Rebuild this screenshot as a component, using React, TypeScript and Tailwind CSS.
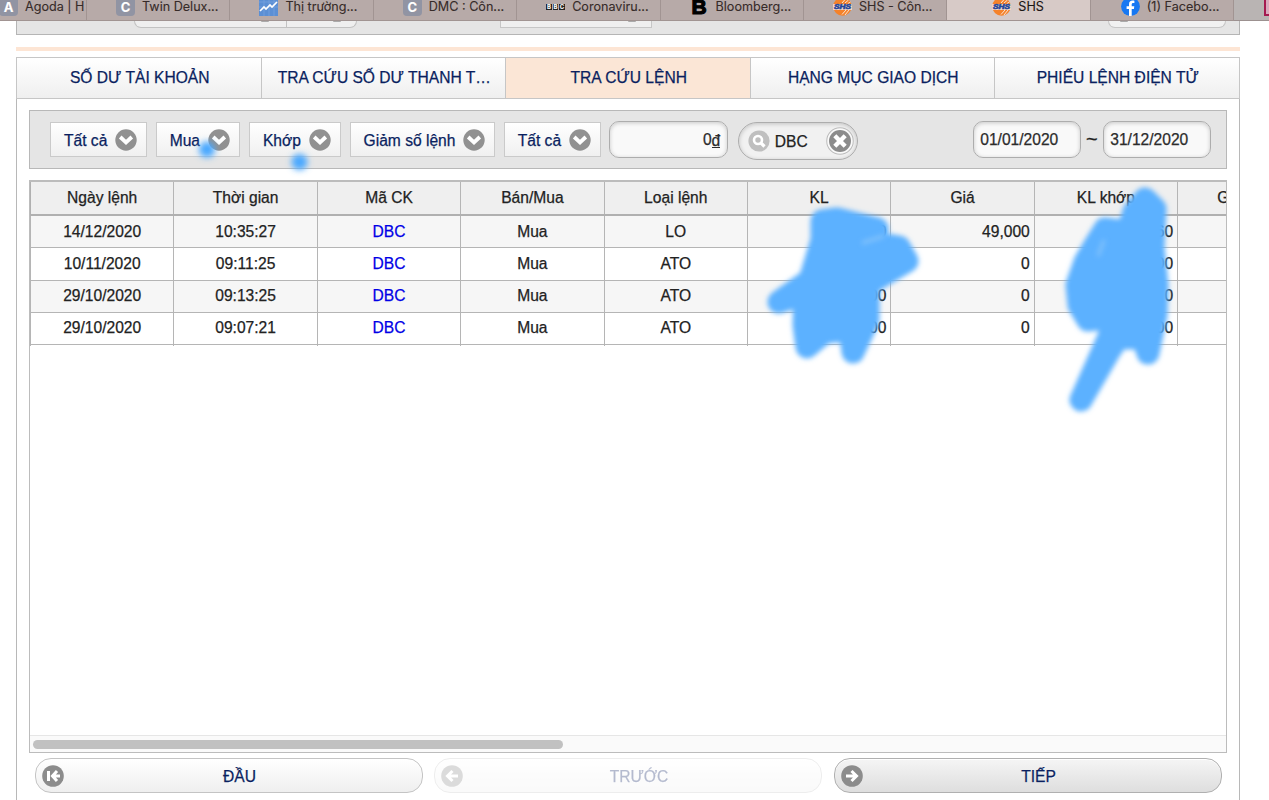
import React from "react";

const FONT = "font-['Liberation_Sans',Arial,sans-serif]";

function ChevronBadge() {
  return (
    <svg className="h-[22px] w-[22px] shrink-0" viewBox="0 0 22 22">
      <circle cx="11" cy="11" r="10.7" fill="#919191" />
      <path d="M5.2 8 L11 13.4 L16.8 8" fill="none" stroke="#fff" strokeWidth="3.8" />
    </svg>
  );
}

function ShsLogo() {
  return (
    <svg className="h-[19px] w-[19px]" viewBox="0 0 19 19">
      <circle cx="9.5" cy="9.5" r="9.3" fill="#f5822a" />
      <path d="M0 7 H19 V13 H0Z" fill="#f3d3c0" />
      <path d="M9 17.5 L13 13 M12 18 L16 13 M9 6 L13 1.5 M12 6 L15.5 3 M15 6.5 L17.5 5" stroke="#fbe3d2" strokeWidth="1" />
      <text x="9.5" y="12.4" textAnchor="middle" fontSize="6.6" fontWeight="bold" fontStyle="italic" fontFamily="Liberation Sans" fill="#24469b" stroke="#24469b" strokeWidth="0.6" textLength="17" lengthAdjust="spacingAndGlyphs">SHS</text>
    </svg>
  );
}

function Letter({ children }: { children: string }) {
  return (
    <span className="flex h-[19px] w-[19px] items-center justify-center rounded-[4px] bg-[#9194a3] text-[13px] font-bold text-white">{children}</span>
  );
}

const browserTabs: { icon: React.ReactNode; label: string; cls: string }[] = [
  { icon: <Letter>A</Letter>, label: "Agoda | H", cls: "w-[87px] pl-0" },
  { icon: <Letter>C</Letter>, label: "Twin Delux...", cls: "w-[143.4px] pl-[29px]" },
  {
    icon: (
      <svg className="h-[19px] w-[19px]" viewBox="0 0 19 19">
        <rect width="19" height="19" fill="#5b8fd4" />
        <path d="M0 5H19M0 10H19M5 0V19M10 0V19M15 0V19" stroke="#79a5df" strokeWidth=".7" />
        <path d="M1 14 L5 10 L7 12 L11 8 L13 10 L18 5" fill="none" stroke="#fff" strokeWidth="1.7" />
      </svg>
    ),
    label: "Thị trường...", cls: "w-[143.4px] pl-[29px]",
  },
  { icon: <Letter>C</Letter>, label: "DMC : Côn...", cls: "w-[143.4px] pl-[29px]" },
  {
    icon: (
      <span className="flex h-[19px] w-[19px] items-center gap-px">
        {["B", "B", "C"].map((c, i) => (
          <b key={i} className="flex h-[6px] w-[5.5px] items-center justify-center bg-[#222] text-[6px] leading-none text-white">{c}</b>
        ))}
      </span>
    ),
    label: "Coronaviru...", cls: "w-[143.4px] pl-[29px]",
  },
  { icon: <span className="flex h-[19px] w-[19px] items-center justify-center font-['Liberation_Sans'] text-[21px] font-black leading-none text-black [-webkit-text-stroke:1.2px_black]">B</span>, label: "Bloomberg...", cls: "w-[143.4px] pl-[29px]" },
  { icon: <ShsLogo />, label: "SHS - Côn...", cls: "w-[143.4px] pl-[29px]" },
  { icon: <ShsLogo />, label: "SHS", cls: "w-[143.4px] pl-[45px] bg-[#d7cac7] text-[#1b1614]" },
  {
    icon: (
      <svg className="h-[19px] w-[19px]" viewBox="0 0 19 19">
        <circle cx="9.5" cy="9.5" r="9.4" fill="#1778f2" />
        <path d="M8 19V12H5.6V9.3H8V7.2C8 4.8 9.4 3.5 11.5 3.5c1 0 1.9.2 1.9.2V6h-1.2c-1.1 0-1.5.7-1.5 1.4v1.9h2.6l-.4 2.7h-2.2v7z" fill="#fff" />
      </svg>
    ),
    label: "(1) Facebo...", cls: "w-[143.4px] pl-[30px]",
  },
];

const sections = ["SỐ DƯ TÀI KHOẢN", "TRA CỨU SỐ DƯ THANH T…", "TRA CỨU LỆNH", "HẠNG MỤC GIAO DỊCH", "PHIẾU LỆNH ĐIỆN TỬ"];

const filters = [
  { label: "Tất cả", w: "w-[97px]" },
  { label: "Mua", w: "w-[84.5px]" },
  { label: "Khớp", w: "w-[92px]" },
  { label: "Giảm số lệnh", w: "w-[145.5px]" },
  { label: "Tất cả", w: "w-[97px]" },
];

const headers = ["Ngày lệnh", "Thời gian", "Mã CK", "Bán/Mua", "Loại lệnh", "KL", "Giá", "KL khớp", "Giá khớp"];
const rows = [
  ["14/12/2020", "10:35:27", "DBC", "Mua", "LO", "00", "49,000", "60", ""],
  ["10/11/2020", "09:11:25", "DBC", "Mua", "ATO", "0", "0", "00", ""],
  ["29/10/2020", "09:13:25", "DBC", "Mua", "ATO", "00", "0", "0", ""],
  ["29/10/2020", "09:07:21", "DBC", "Mua", "ATO", "00", "0", "00", ""],
];

const field = "flex h-[37px] items-center rounded-[10px] border border-[#adadad] bg-[#f9f9f9] px-[6.5px] text-[#2c2c2c] shadow-[inset_0_1px_4px_rgba(0,0,0,0.2)]";
const GRID = "grid w-[1291px] grid-cols-[repeat(9,143.4px)]";

function Pager({ label, icon, tone }: { label: string; icon: string; tone: string }) {
  return (
    <div className={`flex h-[35px] w-[388px] items-center rounded-[16px] border pl-[6px] pr-[6px] shadow-[inset_0_1px_0_white] ${tone}`}>
      <svg className="h-[22px] w-[22px]" viewBox="0 0 22 22">
        <circle cx="11" cy="11" r="10.8" fill="#8c8c8c" />
        <path d={icon} fill="none" stroke="#fff" strokeWidth="3" />
      </svg>
      <span className="mt-px flex-1 pb-0 pt-px text-center [text-shadow:0_1px_0_#fff]">{label}</span>
    </div>
  );
}

export default function App() {
  return (
    <div className={`relative flex h-[800px] w-[1269px] flex-col overflow-hidden bg-white text-[15.6px] leading-[18px] text-[#222] [-webkit-text-stroke:0.25px_currentColor] ${FONT}`}>
      <div className="flex h-[21px] shrink-0 border-b border-[#9c9190] bg-[#b7aaa8] font-['Inter',sans-serif] text-[12.6px] text-[#362b29] [-webkit-text-stroke:0.1px_currentColor]">
        {browserTabs.map((t, i) => (
          <div key={i} className={`flex h-[21px] shrink-0 whitespace-nowrap border-b border-r border-[#a19492] ${t.cls}`}>
            <span className={`mt-[-3px] h-[19px] w-[19px] shrink-0 ${i === 0 ? "ml-[-1px]" : ""}`}>{t.icon}</span>
            <span className="ml-[7px] mt-[-2.5px]">{t.label}</span>
          </div>
        ))}
        <div className="flex h-[21px] flex-1 justify-end border-b border-[#9c9190] bg-[#b9b4b3]">
          <span className="h-[16px] w-[5px] border-b-2 border-l-2 border-[#a51a50] bg-[#d9a9bd]" />
        </div>
      </div>

      <div className="ml-4 flex h-[14px] w-[1224px] shrink-0 items-start border border-t-0 border-[#b5b5b5] bg-[#e5e5e5]">
        <div className="ml-[117px] flex h-[7px] w-[223px] rounded-b-[12px] border border-t-0 border-[#c2c2c2] bg-[#efefef]">
          <span className="w-[152px] border-r border-[#c2c2c2] pl-[126px]">
            <span className="block h-[1px] w-[8px] rounded-b bg-[#aaa]" />
          </span>
          <span className="ml-[46px] h-[1px] w-[8px] rounded-b bg-[#aaa]" />
        </div>
        <div className="ml-[143px] h-[7px] w-[152px] border border-t-0 border-[#c6c6c6] bg-[#efefef] pl-[127px]">
          <span className="block h-[1px] w-[8px] rounded-b bg-[#aaa]" />
        </div>
        <div className="ml-[456px] h-[7px] w-[118px] rounded-b-[16px] border border-t-0 border-[#c6c6c6] bg-[#f1f1f1] pl-[11px]">
          <span className="block h-[1px] w-[8px] rounded-b bg-[#aaa]" />
        </div>
      </div>
      <div className="ml-4 mt-[12px] h-[4px] w-[1224px] shrink-0 bg-[#fde5d4]" />

      <div className="ml-4 mt-[6px] grid h-[42px] w-[1224px] shrink-0 grid-cols-[245px_244px_245px_244px_244px] border border-[#c6c6c6]">
        {sections.map((s, i) => (
          <div key={s} className={`flex items-center justify-center whitespace-nowrap text-[15.6px] text-[#0a1f60] ${i < 4 ? "border-r border-[#c6c6c6]" : ""} ${i === 2 ? "bg-[#fbe6d6]" : "bg-linear-to-b from-white to-[#efefef]"}`}>
            <span className="ml-[1.5px]">{s}</span>
          </div>
        ))}
      </div>

      <div className="ml-4 flex w-[1224px] flex-1 flex-col border-x border-[#b8b8b8] px-[12px] pt-[11px]">
        <div className="flex h-[59px] w-[1198px] shrink-0 items-start border border-[#b8b8b8] bg-[#e5e5e5] pl-[20px] pt-[10px]">
          <div className="mt-px flex gap-[8.7px]">
            {filters.map((f, i) => (
              <div key={i} className={`flex h-[35px] items-center justify-between whitespace-nowrap border border-[#cacaca] bg-linear-to-b from-white to-[#f0f0f0] pl-[13px] pr-[9px] text-[#0a1f60] ${f.w}`}>
                <span className="pt-[2px]">{f.label}</span>
                <ChevronBadge />
              </div>
            ))}
          </div>
          <div className={`${field} ml-[8px] w-[119px] justify-end`}>
            0<span className="inline-block h-[16px] border-b border-[#2c2c2c] leading-[18px]">đ</span>
          </div>
          <div className="ml-[10px] mt-[1px] flex h-[38px] w-[120px] items-center rounded-full border border-[#adadad] bg-[#f1f1f1] pl-[9px] pr-[3px] shadow-[inset_0_1px_4px_rgba(0,0,0,0.2)]">
            <svg className="h-[22px] w-[22px]" viewBox="0 0 22 22">
              <circle cx="11" cy="11" r="10.6" fill="#bfbfbf" />
              <circle cx="10" cy="10" r="4" fill="none" stroke="#fff" strokeWidth="2.6" />
              <path d="M12.8 12.8 L16.5 16.5" stroke="#fff" strokeWidth="3.2" />
            </svg>
            <span className="ml-[5px] flex-1 pt-[2px]">DBC</span>
            <svg className="h-[28px] w-[28px]" viewBox="0 0 27 27">
              <circle cx="13.5" cy="13.5" r="12.8" fill="#fafafa" stroke="#bcbcbc" />
              <circle cx="13.5" cy="13.5" r="10.6" fill="#8c8c8c" />
              <path d="M8.5 8.5 L18.5 18.5 M18.5 8.5 L8.5 18.5" stroke="#fff" strokeWidth="4.2" />
            </svg>
          </div>
          <div className={`${field} ml-[115px] w-[108px]`}>01/01/2020</div>
          <span className="w-[22px] pt-[9px] text-center text-[20px]">~</span>
          <div className={`${field} w-[108px]`}>31/12/2020</div>
        </div>

        <div className="mt-[11px] flex h-[573px] w-[1198px] shrink-0 flex-col overflow-hidden border border-t-2 border-[#bcbcbc] bg-white">
          <div className={`${GRID} h-[34px] border-b-2 border-l border-[#b0b0b0] bg-[#efefef]`}>
            {headers.map((h) => (
              <div key={h} className="flex items-center justify-center border-r border-[#b5b5b5]">{h}</div>
            ))}
          </div>
          {rows.map((r, i) => (
            <div key={i} className={`${GRID} h-[32.25px] border-b border-l border-[#b5b5b5] ${i % 2 ? "bg-white" : "bg-[#f6f6f6]"}`}>
              {r.map((c, j) => (
                <div key={j} className={`flex items-center border-r border-[#b5b5b5] ${j > 4 ? "justify-end pr-[4px]" : "justify-center"} ${j === 2 ? "text-[#0000e6]" : ""}`}>{c}</div>
              ))}
            </div>
          ))}
          <div className={`${GRID} h-[1px] border-l border-[#b5b5b5]`}>
            {headers.map((h) => (
              <div key={h} className="border-r border-[#b5b5b5]" />
            ))}
          </div>
          <div className="mt-auto flex h-[17px] shrink-0 items-center border-t border-[#e6e6e6] bg-[#fafafa] pl-[3px]">
            <div className="h-[9px] w-[530px] rounded-full bg-[#c1c1c1]" />
          </div>
        </div>

        <div className="ml-[5.5px] mt-[5px] flex w-[1187px] justify-between text-[#0a1f60]">
          <Pager label="ĐẦU" tone="border-[#c4c4c4] bg-linear-to-b from-white to-[#efefef]" icon="M6.5 6V16 M18 11H11 M15 6L10.5 11L15 16" />
          <Pager label="TRƯỚC" tone="border-[#c4c4c4] bg-linear-to-b from-white to-[#efefef] opacity-30" icon="M17 11H7 M11.5 6L6.5 11L11.5 16" />
          <Pager label="TIẾP" tone="border-[#b0b0b0] bg-linear-to-b from-[#f5f5f5] to-[#dedede]" icon="M5 11H15 M10.5 6L15.5 11L10.5 16" />
        </div>
      </div>

      <svg className="pointer-events-none absolute inset-0 h-[800px] w-[1269px]" viewBox="0 0 1269 800">
        <defs>
          <filter id="soft" x="-50%" y="-50%" width="200%" height="200%"><feGaussianBlur stdDeviation="2.6" /></filter>
          <filter id="dot" x="-100%" y="-100%" width="300%" height="300%"><feGaussianBlur stdDeviation="3.2" /></filter>
        </defs>
        <g fill="#5cb1ff" stroke="#5cb1ff" strokeWidth="23" strokeLinejoin="round" filter="url(#soft)">
          <path d="M822 221 L837 219 L877 229 L870 242 L899 247 L907 261 L868 284 L868 320 L853 352 L850 330 L825 332 L807 347 L804 325 L805 293 L779 302 L810 280 L822 240Z" />
          <path d="M1145 199 L1155 209 L1153 247 L1157 285 L1156 315 L1148 353 L1143 338 L1118 338 L1110 350 L1081 400 L1112 330 L1108 318 L1088 320 L1079 305 L1077 285 L1085 262 L1095 245 L1105 229 L1128 232 L1134 212Z" />
        </g>
        <path d="M862 243 L884 236 M1098 256 L1104 240" stroke="#86c4fb" strokeWidth="3" filter="url(#soft)" />
        <g fill="#48a8ff" filter="url(#dot)">
          <circle cx="207" cy="149.5" r="8" />
          <circle cx="299.5" cy="162" r="8" />
        </g>
      </svg>
    </div>
  );
}
